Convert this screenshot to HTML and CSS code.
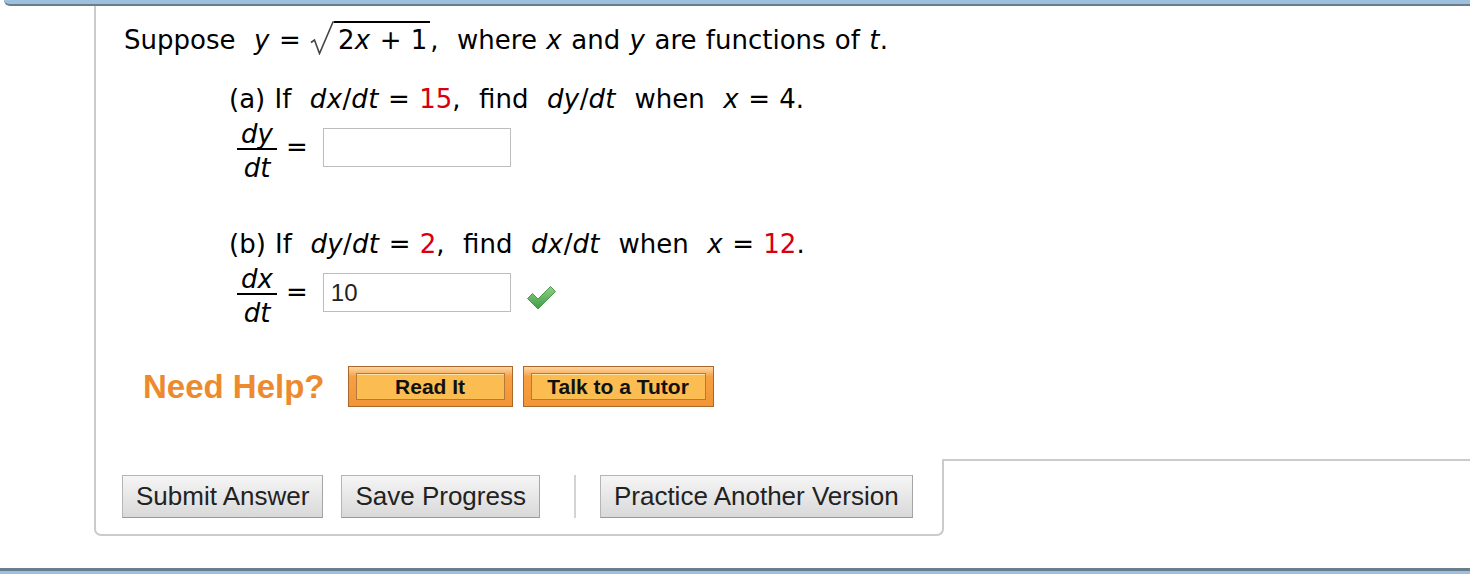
FILE: index.html
```html
<!DOCTYPE html>
<html lang="en">
<head>
    <meta charset="UTF-8">
    <meta name="viewport" content="width=device-width, initial-scale=1.0">
    <title>Question</title>
    <link rel="stylesheet" href="styles.css">
</head>
<body>
    <div class="topbar"></div>

    <div class="question">
        <p class="line first">Suppose&nbsp; <i>y</i> = <svg class="root" width="24" height="34" viewBox="0 0 24 34"><path d="M1 21.5 L4.5 19 L9.5 32.5 L23 1 L24 1" fill="none" stroke="#444" stroke-width="1.6"/></svg><span class="over">2<i>x</i> + 1</span>,&nbsp; where <i>x</i> and <i>y</i> are functions of <i>t</i>.</p>

        <!-- partie (a) -->
        <div class="part">
            <p class="line">(a) If&nbsp; <i>dx</i>/<i>dt</i> = <span class="num">15</span>,&nbsp; find&nbsp; <i>dy</i>/<i>dt</i>&nbsp; when&nbsp; <i>x</i> = 4.</p>
            <div class="answer">
                <div class="frac"><span class="top"><i>dy</i></span><span class="bottom"><i>dt</i></span></div>
                <span class="eq">=</span>
                <input class="box" type="text" value="">
            </div>
        </div>

        <!-- partie (b) -->
        <div class="part">
            <p class="line">(b) If&nbsp; <i>dy</i>/<i>dt</i> = <span class="num">2</span>,&nbsp; find&nbsp; <i>dx</i>/<i>dt</i>&nbsp; when&nbsp; <i>x</i> = <span class="num">12</span>.</p>
            <div class="answer">
                <div class="frac"><span class="top"><i>dx</i></span><span class="bottom"><i>dt</i></span></div>
                <span class="eq">=</span>
                <input class="box" type="text" value="10">
                <svg class="check" width="31" height="26" viewBox="0 0 31 26">
                    <defs>
                        <linearGradient id="g" x1="0" y1="0" x2="0" y2="1">
                            <stop offset="0" stop-color="#8fd08a"/>
                            <stop offset="1" stop-color="#3f9a43"/>
                        </linearGradient>
                    </defs>
                    <path d="M1.5 14.5 L6.5 9.5 L12 15 L24.5 2.5 L29.5 7.5 L12 25 Z" fill="url(#g)" stroke="#4c9a4c" stroke-width="1" stroke-linejoin="round"/>
                </svg>
            </div>
        </div>

        <div class="help">
            <span class="help-label">Need Help?</span>
            <button class="help-btn read"><span>Read It</span></button>
            <button class="help-btn tutor"><span>Talk to a Tutor</span></button>
        </div>
    </div>

    <div class="footer">
        <div class="actions">
            <button class="btn">Submit Answer</button>
            <button class="btn">Save Progress</button>
            <span class="sep"></span>
            <button class="btn">Practice Another Version</button>
        </div>
        <div class="filler"></div>
    </div>

    <div class="bottombar"></div>
</body>
</html>
```

FILE: styles.css
```css
body {
    margin: 0;
    background: #fff;
    color: #000;
    font-family: "DejaVu Sans", Verdana, sans-serif;
    font-size: 26px;
}

.topbar {
    height: 4px;
    margin-left: 4px;
    background: #9dc0de;
    border-bottom: 2px solid #6a7d8b;
    border-bottom-left-radius: 8px;
}

/* bloc de la question */
.question {
    margin-left: 94px;
    border-left: 2px solid #cbcbcb;
    padding: 15px 0 52px 28px;
}
.line { margin: 0; height: 32px; line-height: 32px; white-space: nowrap; word-spacing: 1px; }
.line i { letter-spacing: 0.4px; }
.line.first { margin-bottom: 30px; }
.root { vertical-align: -6px; }
.over { border-top: 2px solid #000; padding: 2px 3px 0 4px; }
.num { color: #d7000f; }

.part { margin-left: 105px; }
.part + .part { margin-top: 46px; }
.answer { display: flex; align-items: flex-start; margin-top: 5px; height: 62px; }
.frac { display: flex; flex-direction: column; width: 40px; margin-left: 8px; text-align: center; }
.frac .top { line-height: 28px; border-bottom: 2px solid #000; }
.frac .bottom { line-height: 28px; padding-top: 4px; }
.eq { line-height: 28px; margin: 13px 0 0 9px; }
.box {
    width: 188px;
    height: 39px;
    box-sizing: border-box;
    margin: 8px 0 0 15px;
    border: 1px solid #bdbdbd;
    padding: 0 7px;
    font-family: "Liberation Sans", Arial, sans-serif;
    font-size: 24px;
    color: #222;
    outline: none;
}
.check { margin: 19px 0 0 15px; }

/* aide */
.help { display: flex; align-items: center; margin: 39px 0 0 19px; height: 41px; }
.help-label {
    font-family: "Liberation Sans", Arial, sans-serif;
    font-weight: bold;
    font-size: 33px;
    color: #ee8a2e;
    margin-right: 23px;
}
.help-btn {
    display: flex;
    height: 41px;
    box-sizing: border-box;
    padding: 6px 7px;
    border: 1px solid #a8682c;
    background: linear-gradient(#fcd7a6, #f6a043 25%, #f29536);
    cursor: pointer;
}
.help-btn span {
    flex: 1;
    display: flex;
    align-items: center;
    justify-content: center;
    border: 1px solid #b37a3a;
    background: #fbbd52;
    box-shadow: inset 0 1px 0 #fde3a8;
    font-family: "Liberation Sans", Arial, sans-serif;
    font-weight: bold;
    font-size: 21px;
    color: #111;
}
.read { width: 165px; }
.tutor { width: 191px; margin-left: 10px; }

/* boutons du bas */
.footer { display: flex; align-items: flex-start; }
.actions {
    display: flex;
    align-items: center;
    width: 850px;
    box-sizing: border-box;
    margin-left: 94px;
    padding: 16px 0 16px 26px;
    border: 2px solid #cbcbcb;
    border-top: none;
    border-radius: 0 0 7px 7px;
}
.filler { flex: 1; height: 0; border-top: 2px solid #cbcbcb; }
.btn {
    height: 43px;
    padding: 0 13px;
    margin-right: 18px;
    border: 1px solid #b5b5b5;
    border-bottom-color: #999;
    border-right-color: #a5a5a5;
    background: linear-gradient(#f5f5f5, #d9d9d9);
    font-family: "Liberation Sans", Arial, sans-serif;
    font-size: 26px;
    color: #222;
    cursor: pointer;
}
.sep { width: 2px; height: 43px; background: #d3d3d3; margin: 0 24px 0 16px; }

.bottombar {
    margin-top: 32px;
    height: 3px;
    background: #9dc0de;
    border-top: 3px solid #6a7d8b;
}
```
